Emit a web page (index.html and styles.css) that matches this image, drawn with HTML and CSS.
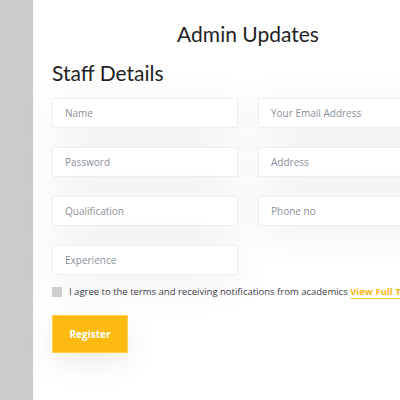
FILE: index.html
```html
<!DOCTYPE html>
<html>
<head>
<meta charset="utf-8">
<link rel="stylesheet" href="styles.css">
</head>
<body>
<div class="page">
  <aside class="sidebar"></aside>
  <main class="main">
    <h1 class="title">Admin Updates</h1>
    <h2 class="subtitle">Staff Details</h2>
    <form class="form">
      <div class="grid">
        <input class="field" placeholder="Name">
        <input class="field" placeholder="Your Email Address">
        <input class="field" placeholder="Password">
        <input class="field" placeholder="Address">
        <input class="field" placeholder="Qualification">
        <input class="field" placeholder="Phone no">
        <input class="field" placeholder="Experience">
      </div>
      <label class="agree">
        <span class="box"></span>
        <span class="agree-text">I agree to the terms and receiving notifications from academics <a class="link">View Full Terms</a></span>
      </label>
      <button type="button" class="btn">Register</button>
    </form>
  </main>
</div>
</body>
</html>
```
FILE: styles.css
```css
html, body {
  margin: 0;
  padding: 0;
  background: #fff;
  overflow: hidden;
  height: 400px;
}
.page {
  display: flex;
  height: 400px;
}
.sidebar {
  width: 33px;
  flex-shrink: 0;
  background: #cbcbcb;
}
.main {
  width: 431px;
  flex-shrink: 0;
  padding: 0 20px 0 19px;
  box-sizing: border-box;
}
.title {
  margin: 19px 0 0;
  text-align: center;
  font-family: Lato, sans-serif;
  font-weight: 400;
  font-size: 21px;
  line-height: 30px;
  color: #1f1f24;
}
.subtitle {
  margin: 10px 0 0;
  font-family: Lato, sans-serif;
  font-weight: 400;
  font-size: 21px;
  line-height: 28px;
  color: #1f1f24;
}
.form {
  margin-top: 11px;
}
.grid {
  display: grid;
  grid-template-columns: 186px 186px;
  column-gap: 20px;
  row-gap: 19px;
}
.field {
  height: 30px;
  box-sizing: border-box;
  border: 1px solid #efefef;
  background: #fff;
  padding: 0 12px;
  font-family: "Open Sans", sans-serif;
  font-size: 10px;
  color: #333;
  outline: none;
  box-shadow: 0 8px 40px rgba(0,0,0,0.07);
}
.field::placeholder {
  color: #8a9099;
}
.agree {
  display: flex;
  align-items: center;
  margin-top: 10px;
  white-space: nowrap;
}
.box {
  width: 10px;
  height: 10px;
  background: #cfcfcf;
  flex-shrink: 0;
}
.agree-text {
  margin-left: 7px;
  font-family: "Open Sans", sans-serif;
  font-size: 9.5px;
  color: #3d4047;
}
.link {
  color: #fbb614;
  font-weight: 700;
  border-bottom: 1px solid #fbc94a;
}
.btn {
  display: block;
  margin-top: 17px;
  width: 76px;
  height: 38px;
  border: 1px solid #ffd04d;
  background: #fdbb12;
  color: #fff;
  font-family: "Open Sans", sans-serif;
  font-weight: 700;
  font-size: 10px;
  box-shadow: 0 10px 30px rgba(0,0,0,0.08);
}
```
